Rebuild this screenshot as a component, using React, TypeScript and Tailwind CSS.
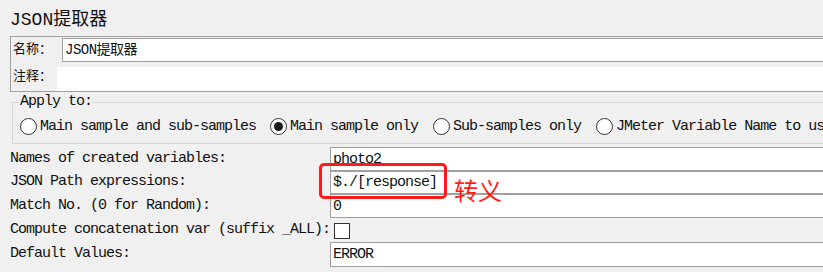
import React from "react";

const mono = "font-['Liberation_Mono','Noto_Sans_CJK_SC',monospace]";

function Radio({ checked, label, className = "" }: { checked?: boolean; label: string; className?: string }) {
  return (
    <div className={`flex items-center ${className}`}>
      <div className="w-[17px] h-[17px] rounded-full border border-[#333] bg-white flex items-center justify-center shrink-0">
        {checked && <div className="w-[9px] h-[9px] rounded-full bg-[#1a1a1a]" />}
      </div>
      <span className="ml-[3px] whitespace-nowrap pt-[1px]">{label}</span>
    </div>
  );
}

export default function App() {
  const rows: { label: string; kind: "field" | "check"; value?: string; h: string }[] = [
    { label: "Names of created variables:", kind: "field", value: "photo2", h: "h-[24px]" },
    { label: "JSON Path expressions:", kind: "field", value: "$./[response]", h: "h-[23px]" },
    { label: "Match No. (0 for Random):", kind: "field", value: "0", h: "h-[24px]" },
    { label: "Compute concatenation var (suffix _ALL):", kind: "check", h: "h-[24px]" },
    { label: "Default Values:", kind: "field", value: "ERROR", h: "h-[25px]" },
  ];
  return (
    <div className={`relative w-[823px] h-[272px] bg-[#f0f0f0] overflow-hidden text-[#111] ${mono} text-[15px] tracking-[-1px]`}>
      {/* Title */}
      <div className="h-[36px] pl-[10px] pt-[8px] text-[18px] tracking-[0px] leading-[24px]">JSON提取器</div>

      {/* Name / comment panel */}
      <div className="ml-[10px] border border-r-0 border-[#a0a0a0] h-[56px] flex flex-col">
        <div className="flex h-[25px] items-start pt-[1px]">
          <div className="w-[51px] pl-[2px] h-[24px] flex items-center text-[13px] tracking-[0px]">名称：</div>
          <div className="flex-1 h-[24px] border border-r-0 border-[#a0a0a0] bg-white flex items-center pl-[2px] pt-[1px] text-[14px] tracking-[-0.5px]">
            JSON提取器
          </div>
        </div>
        <div className="flex h-[29px]">
          <div className="w-[46px] pl-[2px] flex items-center text-[13px] tracking-[0px]">注释：</div>
          <div className="flex-1 mt-[5px] h-[24px] bg-white" />
        </div>
      </div>

      {/* Apply to group */}
      <div className="relative mt-[10px] ml-[12px] h-[42px] border border-r-0 border-[#d5d5d5] pt-[15px] pl-[7px]">
        <div className="absolute left-[6px] top-[-11px] px-[1px] bg-[#f0f0f0] leading-[20px]">Apply to:</div>
        <div className="flex items-center h-[17px]">
          <Radio label="Main sample and sub-samples" />
          <Radio checked label="Main sample only" className="ml-[14px]" />
          <Radio label="Sub-samples only" className="ml-[15px]" />
          <Radio label="JMeter Variable Name to use" className="ml-[15px]" />
        </div>
      </div>

      {/* Fields */}
      <div className="mt-[3px] flex flex-col">
        {rows.map((r) => (
          <div key={r.label} className={`flex ${r.h}`}>
            <div className="w-[330px] pl-[10px] flex items-center whitespace-nowrap">{r.label}</div>
            {r.kind === "field" ? (
              <div className="flex-1 border border-r-0 border-[#a0a0a0] bg-white flex items-center pl-[2px] pt-[2px] whitespace-nowrap overflow-hidden">
                {r.value}
              </div>
            ) : (
              <div className="flex-1 flex items-center pl-[4px] pt-[2px]">
                <div className="w-[16px] h-[16px] border border-[#333] bg-white" />
              </div>
            )}
          </div>
        ))}
      </div>

      {/* Annotation overlays */}
      <div className="absolute left-[319px] top-[163px] w-[128px] h-[36px] border-[3px] border-[#ff1a1a] rounded-[5px]" />
      <div className="absolute left-[454px] top-[174px] text-[24px] leading-[32px] tracking-[0px] text-[#ff1a1a] font-['Noto_Sans_CJK_SC',sans-serif]">
        转义
      </div>
    </div>
  );
}
